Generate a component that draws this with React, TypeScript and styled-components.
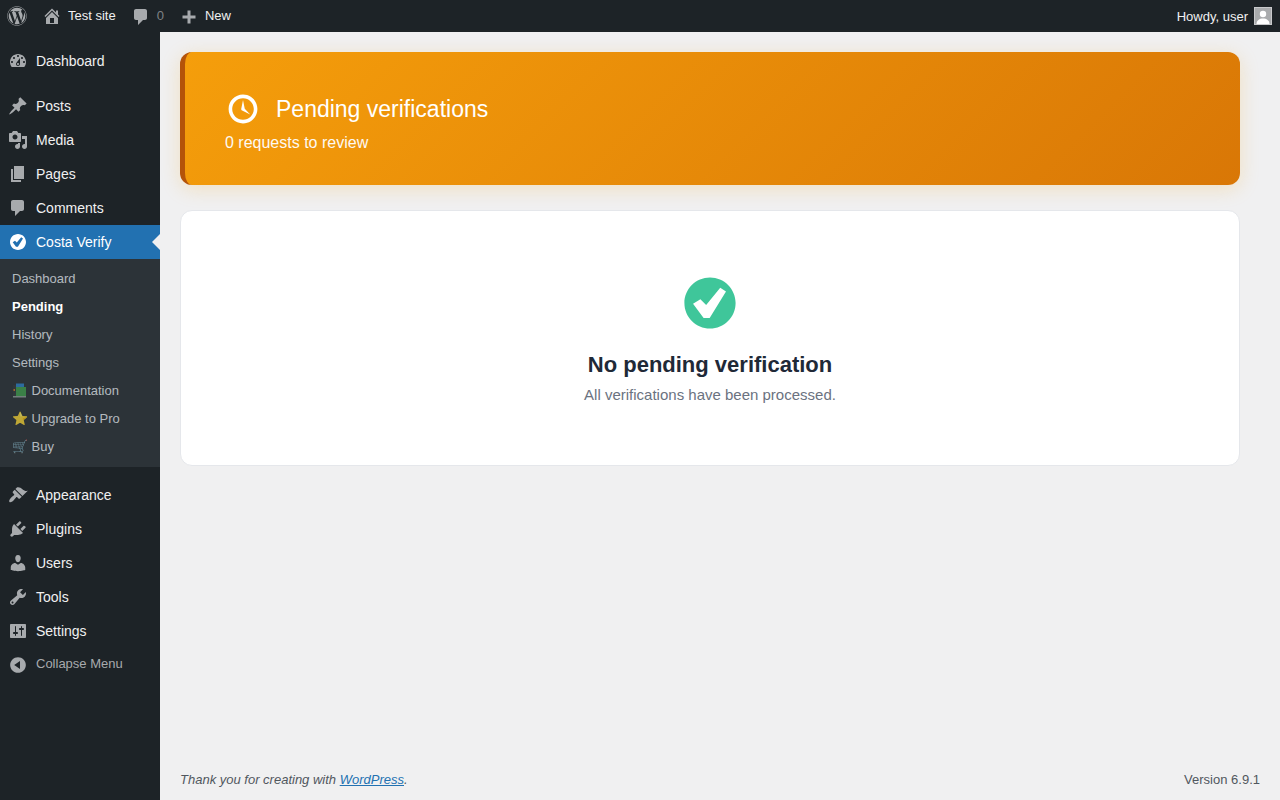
import React from "react";
import styled, { createGlobalStyle } from "styled-components";
import { FaWordpress } from "react-icons/fa";

const icons = {
  home: "M16 8.5l1.53 1.53-1.06 1.06L10 4.62l-6.47 6.47-1.06-1.06L10 2.5l4 4v-2h2v4zm-6-2.46l6 5.99V18H4v-5.97zM12 17v-5H8v5h4z",
  comments: "M5 2h9c1.1 0 2 .9 2 2v7c0 1.1-.9 2-2 2h-2l-5 5v-5H5c-1.1 0-2-.9-2-2V4c0-1.1.9-2 2-2z",
  plus: "M16.5 8.5v3h-5v5h-3v-5h-5v-3h5v-5h3v5h5z",
  dashboard: "M3.76 16h12.48c1.1-1.37 1.76-3.11 1.76-5 0-4.42-3.58-8-8-8s-8 3.58-8 8c0 1.89.66 3.63 1.76 5zM10 4c.55 0 1 .45 1 1s-.45 1-1 1-1-.45-1-1 .45-1 1-1zM6 6c.55 0 1 .45 1 1s-.45 1-1 1-1-.45-1-1 .45-1 1-1zm8 0c.55 0 1 .45 1 1s-.45 1-1 1-1-.45-1-1 .45-1 1-1zm-5.37 5.55L12 7v6c0 1.1-.9 2-2 2s-2-.9-2-2c0-.57.24-1.08.63-1.45zM4 10c.55 0 1 .45 1 1s-.45 1-1 1-1-.45-1-1 .45-1 1-1zm12 0c.55 0 1 .45 1 1s-.45 1-1 1-1-.45-1-1 .45-1 1-1zm-5 3c0-.55-.45-1-1-1s-1 .45-1 1 .45 1 1 1 1-.45 1-1z",
  post: "M10.44 3.02l1.82-1.82 6.36 6.35-1.83 1.82c-1.05-.68-2.48-.57-3.41.36l-.75.75c-.92.93-1.04 2.35-.35 3.41l-1.83 1.82-2.41-2.41-2.8 2.79c-.42.42-3.38 2.71-3.8 2.29s1.86-3.39 2.28-3.81l2.79-2.79L4.1 9.36l1.83-1.82c1.05.69 2.48.57 3.4-.36l.75-.75c.93-.92 1.05-2.35.36-3.41z",
  media: "M13 11V4c0-.55-.45-1-1-1h-1.67L9 1H5L3.67 3H2c-.55 0-1 .45-1 1v7c0 .55.45 1 1 1h10c.55 0 1-.45 1-1zM7 4.5c1.38 0 2.5 1.12 2.5 2.5S8.38 9.5 7 9.5 4.5 8.38 4.5 7 5.62 4.5 7 4.5zM14 6h5v10.5c0 1.38-1.12 2.5-2.5 2.5S14 17.88 14 16.5s1.12-2.5 2.5-2.5c.17 0 .34.02.5.05V9h-3V6zm-4 8.05V13h2v3.5c0 1.38-1.12 2.5-2.5 2.5S7 17.88 7 16.5 8.12 14 9.5 14c.17 0 .34.02.5.05z",
  page: "M6 15V2h10v13H6zm-1 1h8v2H3V5h2v11z",
  yes: "M10 2c-4.42 0-8 3.58-8 8s3.58 8 8 8 8-3.58 8-8-3.58-8-8-8zM9.9 14.7H8L4.7 10.2 7 8.8 8.8 10.6 13.2 5.2 15 6.4z",
  appearance: "M14.48 11.06L7.41 3.99l1.5-1.5c.5-.56 2.3-.47 3.51.32 1.21.8 1.43 1.28 2.91 2.1 1.18.64 2.45 1.26 4.45.85zm-.71.71L6.7 4.7 4.93 6.47c-.39.39-.39 1.02 0 1.41l1.06 1.06c.39.39.39 1.03 0 1.42-.6.6-1.43 1.11-2.21 1.69-.35.26-.7.53-1.01.84-1.43 1.43-2.01 3.3-1.3 4.01.71.71 2.58.13 4.01-1.3.31-.31.58-.66.84-1.01.58-.78 1.09-1.61 1.69-2.21.39-.39 1.03-.39 1.42 0l1.06 1.06c.39.39 1.02.39 1.41 0z",
  plugins: "M13.11 4.36L9.87 7.6 8 5.73l3.24-3.24c.35-.34 1.05-.2 1.56.32.52.51.66 1.21.31 1.55zm-8 1.77l.91-1.12 9.01 9.01-1.19.84c-.71.71-2.63 1.16-3.82 1.16H6.14L4.9 17.26c-.59.59-1.54.59-2.12 0-.59-.58-.59-1.53 0-2.12l1.24-1.24v-3.88c0-1.13.4-3.19 1.09-3.89zm7.26 3.97l3.24-3.24c.34-.35 1.04-.21 1.55.31.52.51.66 1.21.31 1.55l-3.24 3.25z",
  users: "M10 9.25c-2.27 0-2.73-3.44-2.73-3.44C7 4.02 7.82 2 9.97 2c2.16 0 2.98 2.02 2.71 3.81 0 0-.41 3.44-2.68 3.44zm0 2.57L12.72 10c2.39 0 4.52 2.33 4.52 4.53v2.49s-3.65 1.13-7.24 1.13c-3.65 0-7.24-1.13-7.24-1.13v-2.49c0-2.25 1.94-4.48 4.47-4.48z",
  tools: "M16.68 9.77c-1.34 1.34-3.3 1.67-4.95.99l-5.41 6.52c-.99.99-2.59.99-3.58 0s-.99-2.59 0-3.57l6.52-5.42c-.68-1.65-.35-3.61.99-4.95 1.28-1.28 3.12-1.62 4.72-1.06l-2.89 2.89 2.82 2.82 2.86-2.87c.53 1.58.18 3.39-1.08 4.65zM3.81 16.21c.4.39 1.04.39 1.43 0 .4-.4.4-1.04 0-1.43-.39-.4-1.03-.4-1.43 0-.39.39-.39 1.03 0 1.43z",
  settings: "M18 16V4c0-.55-.45-1-1-1H3c-.55 0-1 .45-1 1v12c0 .55.45 1 1 1h14c.55 0 1-.45 1-1zM8 11h1c.55 0 1 .45 1 1s-.45 1-1 1H8v1.5c0 .28-.22.5-.5.5s-.5-.22-.5-.5V13H6c-.55 0-1-.45-1-1s.45-1 1-1h1V5.5c0-.28.22-.5.5-.5s.5.22.5.5V11zm5-2h-1c-.55 0-1-.45-1-1s.45-1 1-1h1V5.5c0-.28.22-.5.5-.5s.5.22.5.5V7h1c.55 0 1 .45 1 1s-.45 1-1 1h-1v5.5c0 .28-.22.5-.5.5s-.5-.22-.5-.5V9z",
  collapse: "M10 2.16c4.33 0 7.84 3.51 7.84 7.84s-3.51 7.84-7.84 7.84S2.16 14.33 2.16 10 5.71 2.16 10 2.16zm2 11.72V6.12L6.18 9.97z",
  clock: "M10 2c4.42 0 8 3.58 8 8s-3.58 8-8 8-8-3.58-8-8 3.58-8 8-8zm0 14c3.31 0 6-2.69 6-6s-2.69-6-6-6-6 2.69-6 6 2.69 6 6 6zm-.71-5.29c.07.05.14.1.23.15l-.02.02L14 13l-3.03-3.19L10 5l-.97 4.81h.01c0 .02-.01.05-.02.09S9 9.97 9 10c0 .28.1.52.29.71z",
};

type IconName = keyof typeof icons;

const GlobalStyle = createGlobalStyle`
  html, body {
    margin: 0;
    padding: 0;
    background: #f0f0f1;
  }
  body {
    font-family: "Liberation Sans", Arial, sans-serif;
    font-size: 13px;
    color: #3c434a;
  }
  * {
    box-sizing: border-box;
  }
`;

const Page = styled.div`
  width: 1280px;
  height: 800px;
  display: flex;
  flex-direction: column;
  overflow: hidden;
`;

const AdminBar = styled.header`
  height: 32px;
  flex: none;
  display: flex;
  align-items: center;
  justify-content: space-between;
  background: #1d2327;
  color: #f0f0f1;
`;

const BarGroup = styled.div`
  display: flex;
  align-items: center;
  height: 32px;
`;

const BarItem = styled.div<{ $left?: number }>`
  display: flex;
  align-items: center;
  height: 32px;
  padding: 0 8px 0 ${(p) => p.$left ?? 8}px;
  gap: 6px;
  line-height: 32px;
`;

const BarIcon = styled.svg<{ $down?: boolean }>`
  width: 20px;
  height: 20px;
  fill: #a7aaad;
  flex: none;
  margin-top: ${(p) => (p.$down ? 2 : 0)}px;
`;

const WpLogo = styled(FaWordpress)`
  width: 20px;
  height: 20px;
  color: #a7aaad;
  display: block;
`;

const LogoItem = styled.div`
  display: flex;
  align-items: center;
  height: 32px;
  padding: 0 7px;
`;

const CommentCount = styled.span`
  color: #a7aaad;
  opacity: 0.7;
`;

const Howdy = styled.div`
  display: flex;
  align-items: center;
  gap: 6px;
  height: 32px;
  padding-right: 8px;
`;

const Avatar = styled.svg`
  width: 18px;
  height: 18px;
  display: block;
  border: 1px solid #c8c9cb;
  background: #a9abad;
`;

const Body = styled.div`
  flex: 1;
  display: flex;
  min-height: 0;
`;

const Sidebar = styled.nav`
  width: 160px;
  flex: none;
  background: #1d2327;
  padding-top: 12px;
`;

const MenuRow = styled.div<{ $active?: boolean }>`
  position: relative;
  height: 34px;
  display: flex;
  align-items: center;
  gap: 8px;
  padding-left: 8px;
  font-size: 14px;
  color: ${(p) => (p.$active ? "#fff" : "#f0f0f1")};
  background: ${(p) => (p.$active ? "#2271b1" : "transparent")};
`;

const MenuIcon = styled.svg<{ $active?: boolean }>`
  width: 20px;
  height: 20px;
  flex: none;
  fill: ${(p) => (p.$active ? "#fff" : "#a7aaad")};
`;

const ActiveArrow = styled.span`
  position: absolute;
  right: 0;
  top: 50%;
  margin-top: -8px;
  border: 8px solid transparent;
  border-left-width: 0;
  border-right-color: #f0f0f1;
`;

const MenuSeparator = styled.div`
  height: 11px;
`;

const Submenu = styled.div`
  background: #2c3338;
  padding: 6px 0;
`;

const SubItem = styled.div<{ $current?: boolean }>`
  height: 28px;
  line-height: 28px;
  padding-left: 12px;
  font-size: 13px;
  font-weight: ${(p) => (p.$current ? 600 : 400)};
  color: ${(p) => (p.$current ? "#fff" : "rgba(240, 246, 252, 0.7)")};
  white-space: nowrap;
`;

const BookIcon = styled.svg`
  width: 15px;
  height: 15px;
  margin-right: 4.5px;
  vertical-align: -3px;
  opacity: 0.75;
`;

const CollapseRow = styled.div`
  height: 34px;
  display: flex;
  align-items: center;
  gap: 8px;
  padding-left: 8px;
  font-size: 13px;
  color: #a7aaad;
  span {
    position: relative;
    top: -2px;
  }
`;

const Main = styled.main`
  flex: 1;
  min-width: 0;
  display: flex;
  flex-direction: column;
  padding: 20px 20px 0;
`;

const Content = styled.div`
  width: 1060px;
  display: flex;
  flex-direction: column;
  gap: 25px;
`;

const Banner = styled.section`
  height: 133px;
  padding: 39px 40px 0;
  border-left: 5px solid #b45309;
  border-radius: 12px;
  background: linear-gradient(135deg, #f59e0b 0%, #d97706 100%);
  box-shadow: 0 4px 20px rgba(245, 158, 11, 0.2);
  color: #fff;
`;

const BannerTitle = styled.h1`
  margin: 0;
  display: flex;
  align-items: center;
  gap: 15px;
  height: 36px;
  font-size: 23px;
  font-weight: 400;
  line-height: 36px;
`;

const ClockIcon = styled.svg`
  width: 36px;
  height: 36px;
  fill: #fff;
  flex: none;
`;

const BannerText = styled.p`
  margin: 6px 0 0;
  font-size: 16px;
  line-height: 20px;
  opacity: 0.95;
`;

const EmptyCard = styled.section`
  height: 256px;
  padding-top: 60px;
  background: #fff;
  border: 1px solid #e5e7eb;
  border-radius: 12px;
  display: flex;
  flex-direction: column;
  align-items: center;
`;

const EmptyIcon = styled.svg`
  width: 64px;
  height: 64px;
  fill: #10b981;
  opacity: 0.8;
  display: block;
`;

const EmptyTitle = styled.h2`
  margin: 16px 0 0;
  font-size: 22px;
  line-height: 28px;
  font-weight: 700;
  color: #1f2937;
`;

const EmptyText = styled.p`
  margin: 6px 0 0;
  font-size: 15px;
  line-height: 20px;
  color: #6b7280;
`;

const Footer = styled.footer`
  margin-top: auto;
  height: 42px;
  display: flex;
  justify-content: space-between;
  align-items: center;
  font-size: 13px;
  color: #50575e;
  em a {
    color: #2271b1;
  }
`;

const Dash: React.FC<{ name: IconName; as?: React.ElementType; $active?: boolean; $down?: boolean }> = ({
  name,
  as: As = MenuIcon,
  ...rest
}) => (
  <As viewBox="0 0 20 20" aria-hidden="true" {...rest}>
    <path d={icons[name]} />
  </As>
);

const topMenu: [IconName, string][] = [
  ["post", "Posts"],
  ["media", "Media"],
  ["page", "Pages"],
  ["comments", "Comments"],
];

const bottomMenu: [IconName, string][] = [
  ["appearance", "Appearance"],
  ["plugins", "Plugins"],
  ["users", "Users"],
  ["tools", "Tools"],
  ["settings", "Settings"],
];

const App: React.FC = () => {
  return (
    <Page>
      <GlobalStyle />
      <AdminBar>
        <BarGroup>
          <LogoItem>
            <WpLogo />
          </LogoItem>
          <BarItem>
            <Dash name="home" as={BarIcon} />
            Test site
          </BarItem>
          <BarItem $left={7}>
            <Dash name="comments" as={BarIcon} $down />
            <CommentCount>0</CommentCount>
          </BarItem>
          <BarItem $left={7}>
            <Dash name="plus" as={BarIcon} $down />
            New
          </BarItem>
        </BarGroup>
        <Howdy>
          Howdy, user
          <Avatar viewBox="0 0 16 16" aria-hidden="true">
            <circle cx="8" cy="6" r="3.2" fill="#fff" />
            <path d="M1.5 16c0-3.6 3-5.5 6.5-5.5s6.5 1.9 6.5 5.5z" fill="#fff" />
          </Avatar>
        </Howdy>
      </AdminBar>
      <Body>
        <Sidebar>
          <MenuRow>
            <Dash name="dashboard" />
            Dashboard
          </MenuRow>
          <MenuSeparator />
          {topMenu.map(([icon, label]) => (
            <MenuRow key={label}>
              <Dash name={icon} />
              {label}
            </MenuRow>
          ))}
          <MenuRow $active>
            <Dash name="yes" $active />
            Costa Verify
            <ActiveArrow />
          </MenuRow>
          <Submenu>
            <SubItem>Dashboard</SubItem>
            <SubItem $current>Pending</SubItem>
            <SubItem>History</SubItem>
            <SubItem>Settings</SubItem>
            <SubItem>
              <BookIcon viewBox="0 0 15 15" aria-hidden="true">
                <rect x="1" y="2" width="4" height="11" fill="#33393c" />
                <rect x="1.5" y="6" width="1.5" height="2" fill="#c8782a" />
                <rect x="4" y="0.5" width="8" height="4" fill="#2d7fc0" />
                <rect x="4" y="4" width="10" height="9" fill="#3f9a4c" />
                <rect x="1" y="13" width="13" height="1.5" fill="#8a9a94" />
              </BookIcon>
              Documentation
            </SubItem>
            <SubItem>⭐ Upgrade to Pro</SubItem>
            <SubItem>🛒 Buy</SubItem>
          </Submenu>
          <MenuSeparator />
          {bottomMenu.map(([icon, label]) => (
            <MenuRow key={label}>
              <Dash name={icon} />
              {label}
            </MenuRow>
          ))}
          <CollapseRow>
            <Dash name="collapse" />
            <span>Collapse Menu</span>
          </CollapseRow>
        </Sidebar>
        <Main>
          <Content>
            <Banner>
              <BannerTitle>
                <Dash name="clock" as={ClockIcon} />
                Pending verifications
              </BannerTitle>
              <BannerText>0 requests to review</BannerText>
            </Banner>
            <EmptyCard>
              <Dash name="yes" as={EmptyIcon} />
              <EmptyTitle>No pending verification</EmptyTitle>
              <EmptyText>All verifications have been processed.</EmptyText>
            </EmptyCard>
          </Content>
          <Footer>
            <em>
              Thank you for creating with <a href="#wp">WordPress</a>.
            </em>
            <span>Version 6.9.1</span>
          </Footer>
        </Main>
      </Body>
    </Page>
  );
};

export default App;
